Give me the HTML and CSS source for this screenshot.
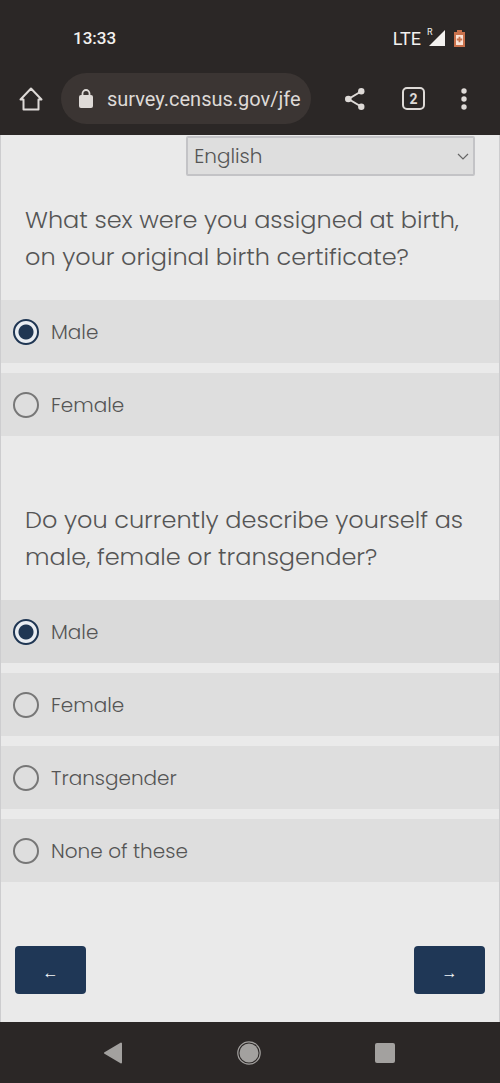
FILE: index.html
```html
<!DOCTYPE html>
<html lang="en">
<head>
  <meta charset="UTF-8" />
  <meta name="viewport" content="width=device-width, initial-scale=1" />
  <title>Survey</title>
  <link rel="stylesheet" href="styles.css">
</head>
<body>
  <header class="browser">
    <div class="status-bar">
      <span class="time">13:33</span>
      <div class="status-icons">
        <span class="network">LTE</span>
        <span class="signal">
          <span class="roaming">R</span>
          <svg width="16" height="16" viewBox="0 0 16 16"><path d="M16 0V16H0Z" fill="#f3f1ef"/></svg>
        </span>
        <svg class="battery" width="11" height="17" viewBox="0 0 11 17">
          <path d="M3 0h5v2h3v15H0V2h3Z" fill="#c9714c"/>
          <path d="M2 5h7v10H2Z" fill="#fbe3d6"/>
          <path d="M4.6 6.8h1.8v1.8h1.8v1.8H6.4v1.8H4.6v-1.8H2.8V8.600h1.800Z" fill="#c9714c"/>
        </svg>
      </div>
    </div>

    <div class="toolbar">
      <button class="tool" aria-label="Home">
        <svg width="24" height="24" viewBox="0 0 24 24" fill="none" stroke="#dedad7" stroke-width="2" stroke-linejoin="round" stroke-linecap="round"><path d="M1.500 12.500 12 1.500 22.500 12.500H19.500V22.500H4.500V12.500Z"/></svg>
      </button>
      <div class="address">
        <svg width="14" height="19" viewBox="0 0 14 19"><rect x="0" y="6" width="14" height="13" rx="2" fill="#dedad7"/><path d="M3.500 7V4.500a3.500 3.500 0 0 1 7 0V7" fill="none" stroke="#dedad7" stroke-width="1.800"/></svg>
        <input class="url" type="text" aria-label="Address" value="survey.census.gov/jfe">
      </div>
      <button class="tool" aria-label="Share">
        <svg width="20" height="22" viewBox="0 0 20 22" fill="#dedad7"><path d="M16 3.500 3.500 11 16 18.500" fill="none" stroke="#dedad7" stroke-width="2"/><circle cx="16.300" cy="3.300" r="3.200"/><circle cx="3.300" cy="11" r="3.300"/><circle cx="16.300" cy="18.700" r="3.200"/></svg>
      </button>
      <button class="tool tabs">2</button>
      <button class="tool" aria-label="Menu">
        <svg width="6" height="22" viewBox="0 0 6 22" fill="#dedad7"><circle cx="3" cy="3" r="2.700"/><circle cx="3" cy="11" r="2.700"/><circle cx="3" cy="19" r="2.700"/></svg>
      </button>
    </div>
  </header>

  <form class="survey">
    <div class="language">
      <select aria-label="Language">
        <option>English</option>
      </select>
      <svg class="chevron" width="12" height="7" viewBox="0 0 12 7" fill="none" stroke="#666" stroke-width="1.200"><path d="M1 1 6 6 11 1"/></svg>
    </div>

    <fieldset class="question">
      <legend>What sex were you assigned at birth, on your original birth certificate?</legend>
      <div class="choices">
        <label class="choice"><input type="radio" name="sex" checked>Male</label>
        <label class="choice"><input type="radio" name="sex">Female</label>
      </div>
    </fieldset>

    <fieldset class="question">
      <legend>Do you currently describe yourself as male, female or transgender?</legend>
      <div class="choices">
        <label class="choice active"><input type="radio" name="gender" checked>Male</label>
        <label class="choice"><input type="radio" name="gender">Female</label>
        <label class="choice"><input type="radio" name="gender">Transgender</label>
        <label class="choice"><input type="radio" name="gender">None of these</label>
      </div>
    </fieldset>

    <div class="buttons">
      <button type="button" class="btn">←</button>
      <button type="button" class="btn">→</button>
    </div>
  </form>

  <nav class="system-nav">
    <button class="tool" aria-label="Back">
      <svg width="18" height="22" viewBox="0 0 18 22"><path d="M17 1.500V20.500L1 11Z" fill="#a3a19f" stroke="#a3a19f" stroke-width="2" stroke-linejoin="round"/></svg>
    </button>
    <button class="tool" aria-label="Home screen">
      <svg width="24" height="24" viewBox="0 0 24 24"><circle cx="12" cy="12" r="9.500" fill="#a3a19f"/><circle cx="12" cy="12" r="11.200" fill="none" stroke="#a3a19f" stroke-width="1.200"/></svg>
    </button>
    <button class="tool" aria-label="Recent apps">
      <svg width="20" height="20" viewBox="0 0 20 20"><rect width="20" height="20" rx="2" fill="#a3a19f"/></svg>
    </button>
  </nav>
</body>
</html>
```
FILE: styles.css
```css
* {
  box-sizing: border-box;
}
body {
  margin: 0;
  min-height: 100vh;
  display: flex;
  flex-direction: column;
  background: #2b2726;
  font-family: Poppins, Inter, sans-serif;
  font-weight: 300;
  color: #555;
}
button, input, select {
  font: inherit;
  margin: 0;
}
svg {
  display: block;
  flex: none;
}

/* browser chrome */
.browser {
  font-family: Roboto, sans-serif;
  font-weight: 400;
  color: #f3f1ef;
}
.status-bar {
  display: flex;
  justify-content: space-between;
  align-items: center;
  padding: 26px 35px 0 73px;
  height: 50px;
}
.time {
  font-size: 17px;
  font-weight: 500;
}
.status-icons {
  display: flex;
  align-items: center;
}
.network {
  font-size: 18px;
  margin-right: 8px;
}
.signal {
  position: relative;
  margin-right: 9px;
}
.roaming {
  position: absolute;
  left: -2px;
  top: -2px;
  font-size: 9px;
  line-height: 9px;
}
.toolbar {
  display: flex;
  align-items: center;
  padding: 23px 18px 11px 13px;
}
.tool {
  display: flex;
  align-items: center;
  justify-content: center;
  min-width: 36px;
  height: 36px;
  padding: 0;
  border: 0;
  background: none;
  color: #dedad7;
}
.address {
  flex: 1;
  min-width: 0;
  display: flex;
  align-items: center;
  gap: 14px;
  height: 51px;
  margin: 0 26px 0 12px;
  padding: 0 10px 0 18px;
  border-radius: 26px;
  background: #3b3533;
}
.url {
  flex: 1;
  min-width: 0;
  padding: 0;
  border: 0;
  outline: 0;
  background: none;
  color: #dedad7;
  font-size: 20px;
}
.tabs {
  min-width: 23px;
  height: 23px;
  margin: 0 21px 0 29px;
  border: 2px solid #dedad7;
  border-radius: 5px;
  font-size: 14px;
  font-weight: 700;
}

/* survey page */
.survey {
  flex: 1;
  padding: 1px 0 28px;
  background: #eaeaea;
  border: solid #cdcdcf;
  border-width: 0 1px;
}
.language {
  position: relative;
  width: 58%;
  margin: 0 24px 0 auto;
}
.language select {
  display: block;
  appearance: none;
  width: 100%;
  height: 40px;
  padding: 0 6px;
  border: 2px solid #c3c3c6;
  border-radius: 2px;
  background: #dedede;
  color: #555;
  font-size: 20px;
}
.chevron {
  position: absolute;
  right: 6px;
  top: 17px;
}
.question {
  min-width: 0;
  margin: 0;
  padding: 25px 0 0;
  border: 0;
}
.question + .question {
  padding-top: 65px;
}
.question legend {
  float: left;
  width: 100%;
  padding: 0 24px 25px;
  font-size: 24px;
  line-height: 37px;
}
.choices {
  clear: both;
  display: grid;
  gap: 10px;
}
.choice {
  display: flex;
  align-items: center;
  gap: 12px;
  height: 63px;
  padding: 0 12px;
  background: #dedede;
  font-size: 20px;
}
.choice.active {
  background: #dadada;
}
.choice input {
  appearance: none;
  width: 26px;
  height: 26px;
  border: 2px solid #777;
  border-radius: 50%;
}
.choice input:checked {
  border-color: #1f3653;
  background: radial-gradient(circle, #1f3653 0 7px, #e9edf2 8px);
}
.buttons {
  display: flex;
  justify-content: space-between;
  padding: 64px 14px 0;
}
.btn {
  width: 71px;
  height: 48px;
  padding: 6px 0 0;
  border: 0;
  border-radius: 4px;
  background: #1f3756;
  color: #f3f6f9;
  font-family: "Liberation Sans", sans-serif;
  font-size: 16px;
}

/* android navigation bar */
.system-nav {
  display: flex;
  justify-content: space-between;
  align-items: center;
  height: 61px;
  padding: 0 97px 0 95px;
}
```
